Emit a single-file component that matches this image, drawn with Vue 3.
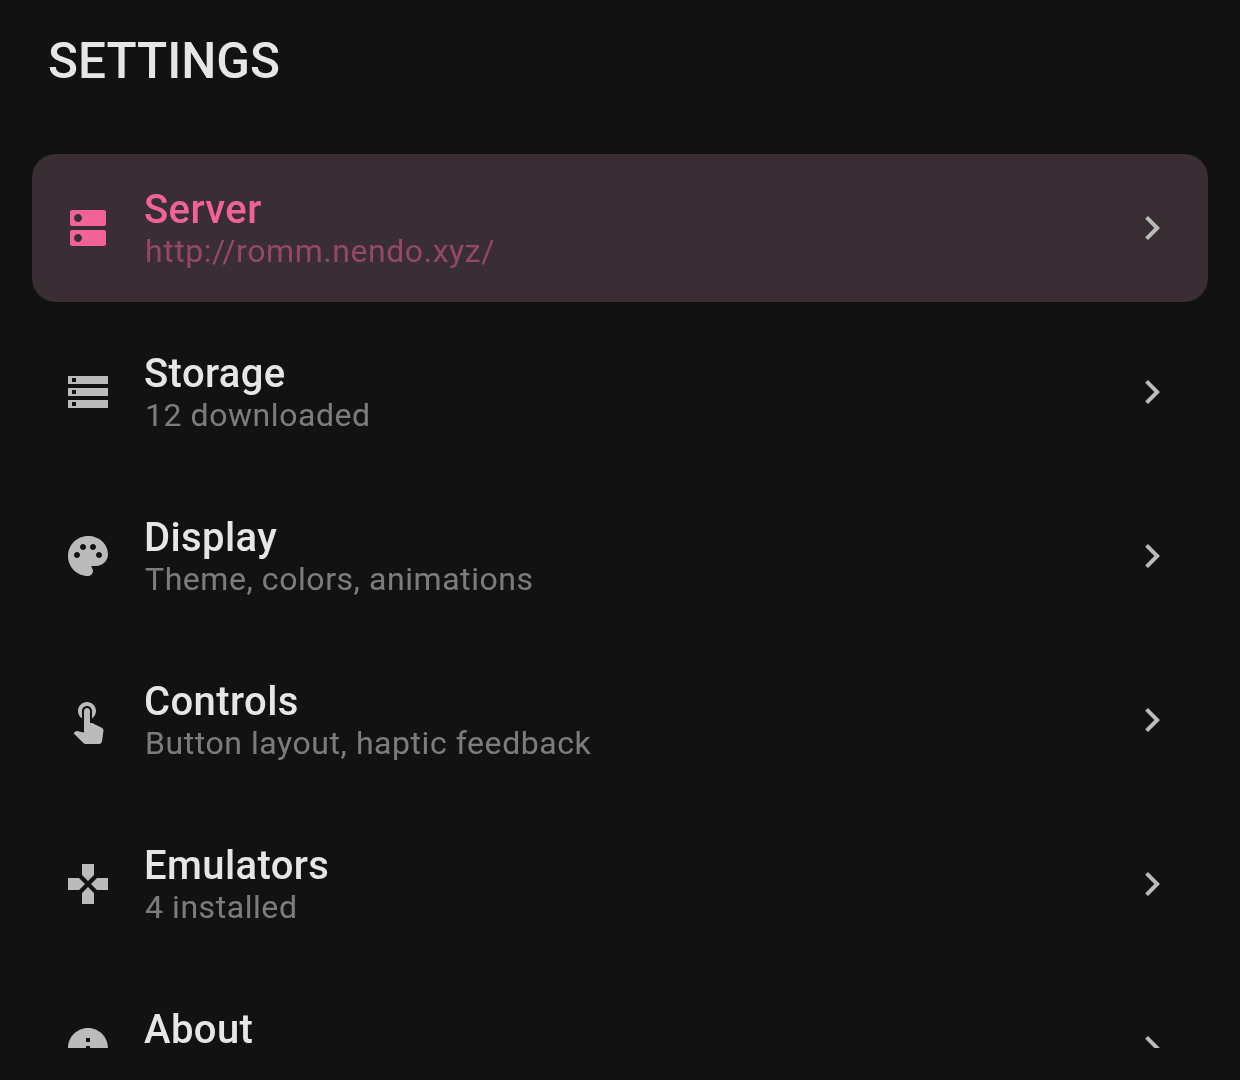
<script setup>
const icons = {
  dns: 'M20 13H4c-.55 0-1 .45-1 1v6c0 .55.45 1 1 1h16c.55 0 1-.45 1-1v-6c0-.55-.45-1-1-1zM7 19c-1.1 0-2-.9-2-2s.9-2 2-2 2 .9 2 2-.9 2-2 2zM20 3H4c-.55 0-1 .45-1 1v6c0 .55.45 1 1 1h16c.55 0 1-.45 1-1V4c0-.55-.45-1-1-1zM7 9c-1.1 0-2-.9-2-2s.9-2 2-2 2 .9 2 2-.9 2-2 2z',
  storage: 'M2 20h20v-4H2v4zm2-3h2v2H4v-2zM2 4v4h20V4H2zm4 3H4V5h2v2zm-4 7h20v-4H2v4zm2-3h2v2H4v-2z',
  palette: 'M12 2C6.49 2 2 6.49 2 12s4.49 10 10 10c1.38 0 2.5-1.12 2.5-2.5 0-.61-.23-1.2-.64-1.67-.08-.1-.13-.21-.13-.33 0-.28.22-.5.5-.5H16c3.31 0 6-2.69 6-6 0-4.96-4.49-9-10-9zm5.5 11c-.83 0-1.5-.67-1.5-1.5s.67-1.5 1.5-1.5 1.5.67 1.5 1.5-.67 1.5-1.5 1.5zm-3-4c-.83 0-1.5-.67-1.5-1.5S13.67 6 14.5 6s1.5.67 1.5 1.5S15.33 9 14.5 9zM5 11.5c0-.83.67-1.5 1.5-1.5s1.5.67 1.5 1.5S7.33 13 6.5 13 5 12.33 5 11.5zm6-4c0 .83-.67 1.5-1.5 1.5S8 8.33 8 7.5 8.67 6 9.5 6s1.5.67 1.5 1.5z',
  touch: 'M9 11.24V7.5C9 6.12 10.12 5 11.5 5S14 6.12 14 7.5v3.74c1.21-.81 2-2.18 2-3.74C16 5.01 13.99 3 11.5 3S7 5.01 7 7.5c0 1.56.79 2.93 2 3.74zm9.84 4.63l-4.54-2.26c-.17-.07-.35-.11-.54-.11H13v-6c0-.83-.67-1.5-1.5-1.5S10 6.67 10 7.5v10.74c-3.6-.76-3.54-.75-3.67-.75-.31 0-.59.13-.79.33l-.79.8 4.94 4.94c.27.27.65.44 1.06.44h6.79c.75 0 1.33-.55 1.44-1.28l.75-5.27c.01-.07.02-.14.02-.2 0-.62-.38-1.16-.91-1.38z',
  gamepad: 'M15 7.5V2H9v5.5l3 3 3-3zM7.5 9H2v6h5.5l3-3-3-3zM9 16.5V22h6v-5.5l-3-3-3 3zM16.5 9l-3 3 3 3H22V9h-5.5z',
  info: 'M12 2C6.48 2 2 6.48 2 12s4.48 10 10 10 10-4.48 10-10S17.52 2 12 2zm1 15h-2v-6h2v6zm0-8h-2V7h2v2z'
}
const chevron = 'M8.59 16.59L13.17 12 8.59 7.41 10 6l6 6-6 6z'

const items = [
  { title: 'Server', sub: 'http://romm.nendo.xyz/', icon: icons.dns, active: true },
  { title: 'Storage', sub: '12 downloaded', icon: icons.storage },
  { title: 'Display', sub: 'Theme, colors, animations', icon: icons.palette },
  { title: 'Controls', sub: 'Button layout, haptic feedback', icon: icons.touch },
  { title: 'Emulators', sub: '4 installed', icon: icons.gamepad },
  { title: 'About', sub: 'Version info', icon: icons.info }
]
</script>

<template>
  <div class="screen">
    <h1 class="heading">SETTINGS</h1>
    <div class="list">
      <div
        v-for="item in items"
        :key="item.title"
        class="row"
        :class="{ active: item.active }"
      >
        <svg class="icon" viewBox="0 0 24 24"><path :d="item.icon" fill="currentColor" /></svg>
        <div class="text">
          <div class="title">{{ item.title }}</div>
          <div class="sub">{{ item.sub }}</div>
        </div>
        <svg class="chevron" viewBox="0 0 24 24"><path :d="chevron" fill="currentColor" /></svg>
      </div>
    </div>
  </div>
</template>

<style>
body {
  margin: 0;
  background: #121212;
}
</style>

<style scoped>
.screen {
  height: 1080px;
  box-sizing: border-box;
  padding-bottom: 32px;
  display: flex;
  flex-direction: column;
  font-family: Roboto, "Liberation Sans", sans-serif;
  overflow: hidden;
}

.heading {
  margin: 0;
  height: 154px;
  box-sizing: border-box;
  padding: 33px 48px 0;
  font-size: 49.5px;
  line-height: 56px;
  font-weight: 500;
  color: #e6e6e6;
  will-change: transform;
}

.list {
  flex: 1;
  min-height: 0;
  overflow: hidden;
  margin: 0 32px;
  display: flex;
  flex-direction: column;
  gap: 16px;
}

.row {
  flex: none;
  height: 148px;
  box-sizing: border-box;
  padding: 0 32px;
  display: flex;
  align-items: center;
  border-radius: 24px;
  color: #e6e6e6;
}

.row.active {
  background: #392e33;
  color: #f26298;
}

.icon {
  flex: none;
  width: 48px;
  height: 48px;
  margin-right: 32px;
  color: #bbbbbb;
}

.row.active .icon {
  color: #f26298;
}

.text {
  flex: 1;
  min-width: 0;
  will-change: transform;
}

.title {
  font-size: 40px;
  line-height: 46px;
  font-weight: 500;
  letter-spacing: 0.4px;
}

.sub {
  font-size: 32px;
  line-height: 36px;
  letter-spacing: 0.56px;
  margin-left: 1px;
  opacity: 0.5;
}

.chevron {
  flex: none;
  width: 48px;
  height: 48px;
  color: #bbbbbb;
}
</style>
